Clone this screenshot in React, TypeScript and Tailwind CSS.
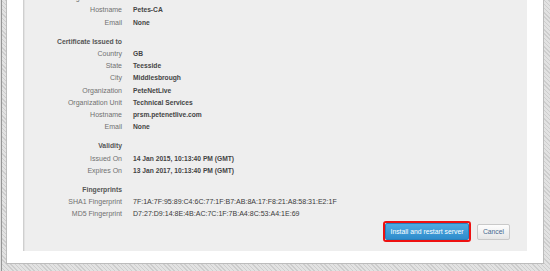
import React from 'react';

type Row = { label: string; value?: string; heading?: boolean; mono?: boolean };

const sections: Row[][] = [
  [
    { label: 'Organization Unit', value: 'None' },
    { label: 'Hostname', value: 'Petes-CA' },
    { label: 'Email', value: 'None' },
  ],
  [
    { label: 'Certificate Issued to', heading: true },
    { label: 'Country', value: 'GB' },
    { label: 'State', value: 'Teesside' },
    { label: 'City', value: 'Middlesbrough' },
    { label: 'Organization', value: 'PeteNetLive' },
    { label: 'Organization Unit', value: 'Technical Services' },
    { label: 'Hostname', value: 'prsm.petenetlive.com' },
    { label: 'Email', value: 'None' },
  ],
  [
    { label: 'Validity', heading: true },
    { label: 'Issued On', value: '14 Jan 2015, 10:13:40 PM (GMT)' },
    { label: 'Expires On', value: '13 Jan 2017, 10:13:40 PM (GMT)' },
  ],
  [
    { label: 'Fingerprints', heading: true },
    { label: 'SHA1 Fingerprint', value: '7F:1A:7F:95:89:C4:6C:77:1F:B7:AB:8A:17:F8:21:A8:58:31:E2:1F', mono: true },
    { label: 'MD5 Fingerprint', value: 'D7:27:D9:14:8E:4B:AC:7C:1F:7B:A4:8C:53:A4:1E:69', mono: true },
  ],
];

function DetailRow({ row }: { row: Row }) {
  return (
    <div className="flex h-[12.25px] items-center leading-[12.25px]">
      {/* label column, right aligned */}
      <div
        className={`w-[98px] shrink-0 text-right whitespace-nowrap ${
          row.heading ? 'text-[6.8px] font-bold text-[#555]' : 'text-[7px] text-[#707070]'
        }`}
      >
        {row.label}
      </div>
      {row.value && (
        <div
          className={`ml-[11px] whitespace-nowrap ${
            row.mono ? 'text-[7.05px] text-[#3a3a3a]' : 'text-[6.7px] font-bold text-[#444]'
          }`}
        >
          {row.value}
        </div>
      )}
    </div>
  );
}

export default function App() {
  return (
    <div className="flex h-[271px] w-[550px] overflow-hidden bg-[repeating-linear-gradient(45deg,#cdcdcd_0_1px,#e2e2e2_1px_3px)] font-['Liberation_Sans',Arial,sans-serif]">
      <div className="w-px shrink-0 bg-[#e0e0e0]" />
      <div className="w-px shrink-0 bg-[#959595]" />

      <div className="flex flex-1 flex-col pb-[7px] pl-[4px] pr-[6px]">
        {/* white dialog body */}
        <div className="flex flex-col border-x border-b border-[#bcbcbc] bg-white px-[16px] pb-[12px]">
          {/* grey details panel */}
          <div className="flex flex-col border-l border-[#cfcfcf] bg-[#eeeeee] pb-[9px] shadow-[inset_1px_0_0_#e2e2e2]">
            <div className="mt-[-7.8px] flex flex-col">
              {sections.map((rows, i) => (
                <div key={i} className={i > 0 ? 'mt-[6.75px]' : ''}>
                  {rows.map((r, j) => (
                    <DetailRow key={j} row={r} />
                  ))}
                </div>
              ))}
            </div>

            <div className="mt-[0.5px] flex items-center justify-end gap-[6px] pr-[17px]">
              <div className="rounded-[3px] border-2 border-[#ee1111]">
                <button className="flex h-[17px] w-[84px] items-center justify-center rounded-[2px] border border-[#2b7fba] bg-[linear-gradient(#4eabe2,#2f8ccc)] text-[6.8px] text-white">
                  Install and restart server
                </button>
              </div>
              <button className="flex h-[16px] w-[33px] items-center justify-center rounded-[2px] border border-[#c9c9c9] bg-[linear-gradient(#fdfdfd,#e6e6e6)] text-[6.8px] text-[#46698f]">
                Cancel
              </button>
            </div>
          </div>
        </div>
      </div>
    </div>
  );
}
